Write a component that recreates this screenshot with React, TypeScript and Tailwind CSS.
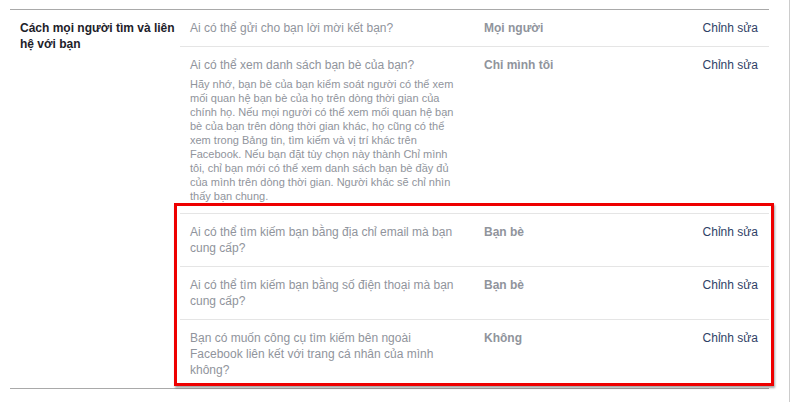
import React from "react";

type Row = {
  q: string;
  desc?: string;
  value: string;
};

const rows: Row[] = [
  { q: "Ai có thể gửi cho bạn lời mời kết bạn?", value: "Mọi người" },
  {
    q: "Ai có thể xem danh sách bạn bè của bạn?",
    desc:
      "Hãy nhớ, bạn bè của bạn kiểm soát người có thể xem mối quan hệ bạn bè của họ trên dòng thời gian của chính họ. Nếu mọi người có thể xem mối quan hệ bạn bè của bạn trên dòng thời gian khác, họ cũng có thể xem trong Bảng tin, tìm kiếm và vị trí khác trên Facebook. Nếu bạn đặt tùy chọn này thành Chỉ mình tôi, chỉ bạn mới có thể xem danh sách bạn bè đầy đủ của mình trên dòng thời gian. Người khác sẽ chỉ nhìn thấy bạn chung.",
    value: "Chỉ mình tôi",
  },
  {
    q: "Ai có thể tìm kiếm bạn bằng địa chỉ email mà bạn cung cấp?",
    value: "Bạn bè",
  },
  {
    q: "Ai có thể tìm kiếm bạn bằng số điện thoại mà bạn cung cấp?",
    value: "Bạn bè",
  },
  {
    q: "Bạn có muốn công cụ tìm kiếm bên ngoài Facebook liên kết với trang cá nhân của mình không?",
    value: "Không",
  },
];

export default function App() {
  return (
    <div
      className="w-[801px] h-[402px] bg-white overflow-hidden"
      style={{ fontFamily: '"Liberation Sans", Arial, sans-serif' }}
    >
      <div className="w-[790px] h-[402px] border-r border-[#cccccc] pt-[9px] pl-[10px] relative">
        <div className="w-[759px] border-t border-b border-[#a9a9a9] flex">
          <div className="w-[170px] shrink-0 pl-[10px] pr-[4px] pt-[10px] text-[12px] leading-[16px] font-bold text-[#1d2129]">
            Cách mọi người tìm và liên hệ với bạn
          </div>
          <div className="flex-1 flex flex-col">
            {rows.map((r, i) => (
              <div
                key={i}
                className={
                  "flex pl-[10px] pr-[11px] pt-[10px] pb-[10px] " +
                  (i > 0 ? "border-t border-[#e5e5e5]" : "")
                }
              >
                <div className="w-[272px] shrink-0 mr-[22px]">
                  <div className="text-[12px] leading-[16px] text-[#90949c]">
                    {r.q}
                  </div>
                  {r.desc && (
                    <div className="mt-[4px] text-[11px] leading-[14px] text-[#90949c] pr-[2px]">
                      {r.desc}
                    </div>
                  )}
                </div>
                <div className="flex-1 text-[12px] leading-[16px] font-bold text-[#90949c]">
                  {r.value}
                </div>
                <div className="text-[12px] leading-[16px] text-[#2f3f66] text-right">
                  Chỉnh sửa
                </div>
              </div>
            ))}
          </div>
        </div>
        <div className="absolute left-[174px] top-[203px] w-[600px] h-[183px] border-[3px] border-[#ee0000] shadow-[1px_2px_2px_rgba(0,0,0,0.35)] pointer-events-none" />
      </div>
    </div>
  );
}
